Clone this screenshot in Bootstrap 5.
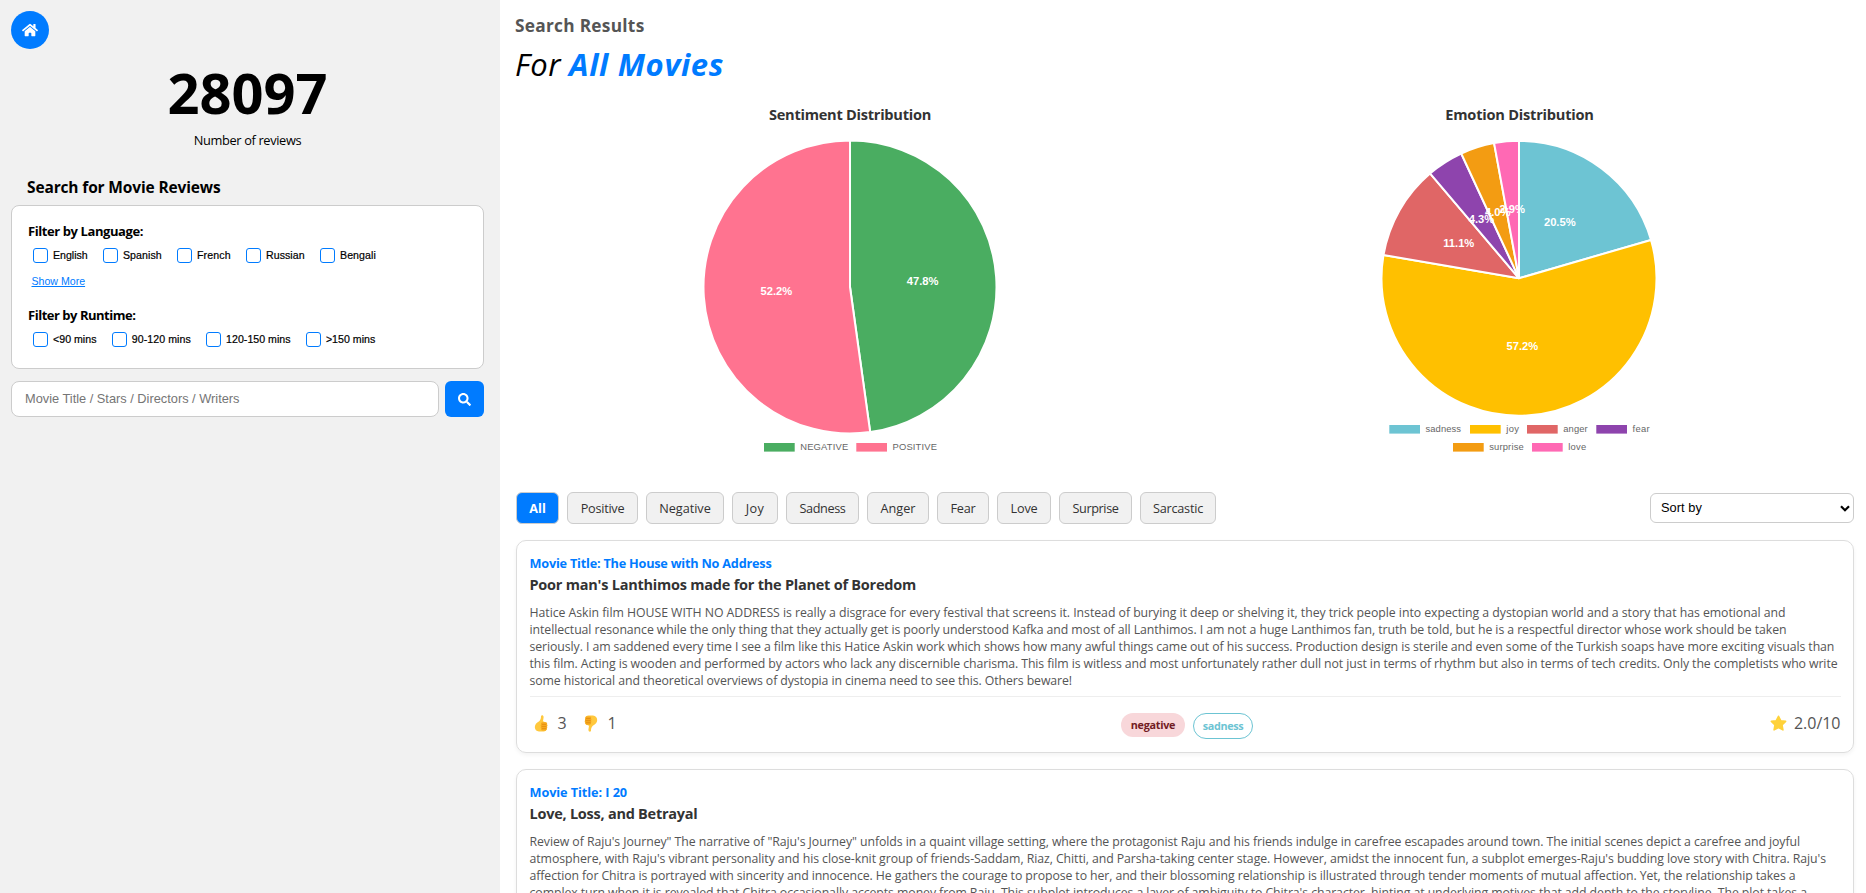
<!DOCTYPE html>
<html lang="en">
<head>
<meta charset="utf-8">
<title>Movie Reviews</title>
<link rel="stylesheet" href="https://cdn.jsdelivr.net/npm/bootstrap@5.3.0/dist/css/bootstrap.min.css">
<style>
body{font-family:"Open Sans","Noto Sans",sans-serif;color:#000;background:#fff}
.page{height:893px;overflow:hidden}
.side{width:500px;height:893px;background:#f1f1f1;padding:11px 16px 0 11px}
.home{width:38px;height:38px;background:#007bff}
.total{font-size:56px;line-height:60px;margin-top:13px}
.total-label{font-size:12.8px;line-height:18px;margin-top:9px}
.side-title{font-size:15.5px;line-height:20px;margin:28px 0 8px 16px}
.filters{height:164px;border:1px solid #ccc;border-radius:8px;padding:16px 17px 0 16px}
.filters h3{font-size:13px;line-height:18px;margin:0 0 8px}
.opts{height:15px;gap:15.3px;padding-left:5px;font:10.6px/15px "Liberation Sans",sans-serif;-webkit-text-stroke:.2px #000}
.opts label{padding-left:20px;position:relative;white-space:nowrap}
.opts label::before{content:"";position:absolute;left:0;top:0;width:15px;height:15px;border:1px solid #007bff;border-radius:3px;background:#fff}
.more{font:10.6px/14px "Liberation Sans",sans-serif;color:#007bff;margin:11px 0 18px 3.5px}
.query-row{margin-top:12px}
.query{height:36px;border:1px solid #ccc;border-radius:8px;font:12.8px "Liberation Sans",sans-serif;padding:0 13px 2px;width:428px}
.query::placeholder{color:#757575}
.go{width:39px;height:36px;background:#007bff;border-radius:6px}
.main-pane{width:1366px;padding:14px 12px 0 15px}
.res{font-size:17.3px;line-height:24px;color:#555;margin:0 0 5px}
.for-line{font-size:31px;line-height:42px;margin:0 0 19px;font-style:italic}
.blue{color:#007bff}
.chart-title{font-size:14.6px;line-height:20px;color:#333;margin:0}
.chart-a{width:670px}.chart-b{width:669px}
svg text{font-family:"Liberation Sans",sans-serif}
.toolbar{padding-left:1px}
.chip{height:32px;border:1px solid #ccc;border-radius:6px;background:#f1f1f1;font-size:12.7px;line-height:30px;color:#333;text-align:center;white-space:nowrap}
.chip.on{background:#007bff;color:#fff;font-weight:700}
.sort{width:204px;height:30px;border:1px solid #ccc;border-radius:6px;font:12.8px/26px "Liberation Sans",sans-serif;padding:0 3px 0 10px;margin-top:1px}
.review{height:213px;border:1px solid #ddd;border-radius:10px;margin:16px 0 0 1px;padding:13px 12.5px 0;box-shadow:0 2px 4px rgba(0,0,0,.05)}
.review h4{font-size:12.7px;line-height:18px;margin:0 0 3px;color:#007bff}
.review h5{font-size:14.5px;line-height:20px;margin:0 0 9px;color:#333}
.body-text{font-size:12.3px;line-height:17px;color:#555;margin:0 0 7px;white-space:nowrap}
.foot{border-top:1px solid #eee;display:grid;grid-template-columns:591.5px auto 1fr;padding-top:16px;align-items:start;color:#555;font-size:16px;line-height:20px}
.foot svg{margin-top:2px}
.tag{font-size:10.8px;font-weight:700;text-align:center;border-radius:13px}
.neg{width:64px;height:24px;line-height:23px;background:#f8d7da;color:#721c24}
.sad{width:60px;height:26px;line-height:24px;border:1px solid #6cc4d3;color:#6cc4d3}
.fit{white-space:nowrap;display:inline-block}
</style>
<script src="https://cdn.jsdelivr.net/npm/bootstrap@5.3.0/dist/js/bootstrap.bundle.min.js"></script>
</head>
<body>
<div class="page d-flex">
<aside class="side flex-shrink-0">
  <a class="home rounded-circle d-flex align-items-center justify-content-center"><svg width="16" height="14.2" viewBox="0 0 576 512" fill="#fff"><path d="M280.37 148.26L96 300.11V464a16 16 0 0 0 16 16l112.06-.29a16 16 0 0 0 15.92-16V368a16 16 0 0 1 16-16h64a16 16 0 0 1 16 16v95.64a16 16 0 0 0 16 16.05L464 480a16 16 0 0 0 16-16V300L295.67 148.26a12.19 12.19 0 0 0-15.3 0zM571.6 251.47L488 182.56V44.05a12 12 0 0 0-12-12h-56a12 12 0 0 0-12 12v72.61L318.47 43a48 48 0 0 0-61 0L4.34 251.47a12 12 0 0 0-1.6 16.9l25.5 31A12 12 0 0 0 45.15 301l235.22-193.74a12.19 12.19 0 0 1 15.3 0L530.9 301a12 12 0 0 0 16.9-1.6l25.5-31a12 12 0 0 0-1.7-16.93z"/></svg></a>
  <div class="total fw-bold text-center"><span class="fit" data-w="160">28097</span></div>
  <div class="total-label text-center"><span class="fit" data-w="107.5">Number of reviews</span></div>
  <h2 class="side-title fw-bold"><span class="fit" data-w="193.5">Search for Movie Reviews</span></h2>
  <div class="filters bg-white">
    <h3 class="fw-bold"><span class="fit" data-w="115">Filter by Language:</span></h3>
    <div class="opts d-flex"><label><span class="fit" data-w="34.7">English</span></label><label><span class="fit" data-w="38.7">Spanish</span></label><label><span class="fit" data-w="33.7">French</span></label><label><span class="fit" data-w="38.7">Russian</span></label><label><span class="fit" data-w="36">Bengali</span></label></div>
    <div class="more text-decoration-underline">Show More</div>
    <h3 class="fw-bold"><span class="fit" data-w="107.5">Filter by Runtime:</span></h3>
    <div class="opts d-flex"><label><span class="fit" data-w="43.5">&lt;90 mins</span></label><label><span class="fit" data-w="59">90-120 mins</span></label><label><span class="fit" data-w="64.5">120-150 mins</span></label><label><span class="fit" data-w="49.5">&gt;150 mins</span></label></div>
  </div>
  <div class="query-row d-flex justify-content-between">
    <input class="query" placeholder="Movie Title / Stars / Directors / Writers">
    <a class="go d-flex align-items-center justify-content-center"><svg width="13" height="13" viewBox="0 0 512 512" fill="#fff"><path d="M505 442.7L405.3 343c-4.5-4.5-10.6-7-17-7H372c27.6-35.3 44-79.7 44-128C416 93.1 322.9 0 208 0S0 93.1 0 208s93.1 208 208 208c48.3 0 92.7-16.4 128-44v16.3c0 6.4 2.5 12.5 7 17l99.7 99.7c9.4 9.4 24.6 9.4 33.9 0l28.3-28.3c9.4-9.4 9.4-24.6.1-34zM208 336c-70.7 0-128-57.2-128-128 0-70.7 57.2-128 128-128 70.7 0 128 57.2 128 128 0 70.7-57.2 128-128 128z"/></svg></a>
  </div>
</aside>
<main class="main-pane flex-shrink-0">
  <h2 class="res fw-bold"><span class="fit" data-w="129.5">Search Results</span></h2>
  <p class="for-line"><span class="fit" data-w="46">For</span> <span class="fit blue fw-bold" data-w="155">All Movies</span></p>
  <div class="d-flex">
    <section class="chart-a text-center"><h3 class="chart-title fw-bold"><span class="fit" data-w="162">Sentiment Distribution</span></h3><svg id="pieA" class="d-block mx-auto" width="340" height="368" viewBox="680 124 340 368"></svg></section>
    <section class="chart-b text-center"><h3 class="chart-title fw-bold"><span class="fit" data-w="148.5">Emotion Distribution</span></h3><svg id="pieB" class="d-block mx-auto" width="339" height="368" viewBox="1350 124 339 368"></svg></section>
  </div>
  <div class="toolbar d-flex justify-content-between align-items-start">
    <div class="d-flex gap-2">
      <div class="chip on" style="width:43px"><span class="fit" data-w="16.5">All</span></div>
      <div class="chip" style="width:71px"><span class="fit" data-w="43.5">Positive</span></div>
      <div class="chip" style="width:78px"><span class="fit" data-w="51.5">Negative</span></div>
      <div class="chip" style="width:46px"><span class="fit" data-w="18.5">Joy</span></div>
      <div class="chip" style="width:73px"><span class="fit" data-w="46">Sadness</span></div>
      <div class="chip" style="width:62px"><span class="fit" data-w="35">Anger</span></div>
      <div class="chip" style="width:52px"><span class="fit" data-w="25">Fear</span></div>
      <div class="chip" style="width:54px"><span class="fit" data-w="27">Love</span></div>
      <div class="chip" style="width:73px"><span class="fit" data-w="46">Surprise</span></div>
      <div class="chip" style="width:76px"><span class="fit" data-w="50">Sarcastic</span></div>
    </div>
    <div class="sort bg-white d-flex justify-content-between align-items-center"><span class="fit" data-w="41">Sort by</span><svg width="10" height="7" viewBox="0 0 10 7"><path d="M1 1.2 5 5.2 9 1.2" fill="none" stroke="#000" stroke-width="2.2"/></svg></div>
  </div>
  <article class="review">
    <h4 class="fw-bold"><span class="fit" data-w="242">Movie Title: The House with No Address</span></h4>
    <h5 class="fw-bold"><span class="fit" data-w="386.5">Poor man's Lanthimos made for the Planet of Boredom</span></h5>
    <p class="body-text"><span class="fit" data-w="1256">Hatice Askin film HOUSE WITH NO ADDRESS is really a disgrace for every festival that screens it. Instead of burying it deep or shelving it, they trick people into expecting a dystopian world and a story that has emotional and</span><br><span class="fit" data-w="1257">intellectual resonance while the only thing that they actually get is poorly understood Kafka and most of all Lanthimos. I am not a huge Lanthimos fan, truth be told, but he is a respectful director whose work should be taken</span><br><span class="fit" data-w="1304.8">seriously. I am saddened every time I see a film like this Hatice Askin work which shows how many awful things came out of his success. Production design is sterile and even some of the Turkish soaps have more exciting visuals than</span><br><span class="fit" data-w="1308">this film. Acting is wooden and performed by actors who lack any discernible charisma. This film is witless and most unfortunately rather dull not just in terms of rhythm but also in terms of tech credits. Only the completists who write</span><br><span class="fit" data-w="542.5">some historical and theoretical overviews of dystopia in cinema need to see this. Others beware!</span></p>
    <div class="foot">
      <div class="d-flex"><svg class="ms-1" width="14" height="17" viewBox="0 0 14 17"><path d="M5.2 6.2C6.8 4.6 7 3 7 1.2 7.4-.2 9.6.1 9.6 2.3L9 6.2 12 7.5q1.3 1 1.2 3l-.4 3.6Q12.4 16.3 10 16.5H5Q1 16 .8 12 .9 8.5 5.2 6.2Z" fill="#ffc83d"/><path d="M8 7.3h4q1.8.3 1 2 .9 1.1 0 2.2.7 1.2-.2 2.1.3 1.5-1.2 1.9H8q-1.3-.4-.9-1.9-.9-1-.1-2.1-.8-1.1 0-2.1Q6.5 8 8 7.3Z" fill="#f6a821"/><path d="M8 9.4h4M7.7 11.5h4.5M8 13.6h4" stroke="#d67d00" stroke-width=".5"/></svg><span style="width:36px;padding-left:10px">3</span><svg width="14" height="17" viewBox="0 0 14 17"><path d="M8.8 10.8C7.2 12.4 7 14 7 15.8 6.6 17.2 4.4 16.9 4.4 14.7L5 10.8 2 9.5Q.7 8.5.8 6.5L1.2 2.9Q1.6.7 4 .5H9Q13 1 13.2 5 13.1 8.5 8.8 10.8Z" fill="#ffc83d"/><path d="M2 1.5h4.5q1.2 1 .5 2.1 1 1 0 2.1.8 1 0 2.1.3 1.5-1 1.9H2.5Q.8 9 1.3 7.6.4 6.500 1.100 5.500.7 4.300 1.400 3.500 1 2.300 2 1.500Z" fill="#f6a821"/><path d="M2 3.500h4.500M1.600 5.600h5M2 7.700h4.500" stroke="#d67d00" stroke-width=".5"/></svg><span style="padding-left:10px">1</span></div>
      <div class="d-flex gap-2"><span class="tag neg"><span class="fit" data-w="44.5">negative</span></span><span class="tag sad"><span class="fit" data-w="40.5">sadness</span></span></div>
      <div class="d-flex justify-content-end"><svg width="17" height="17" viewBox="0 0 17 17"><path d="M8.5 1.3 10.7 5.7 15.6 6.4 12 9.9 12.9 14.9 8.5 12.6 4.1 14.9 5 9.9 1.4 6.4 6.3 5.7Z" fill="#ffd23a" stroke="#ffd23a" stroke-width="1.6" stroke-linejoin="round"/></svg><span style="padding-left:7px"><span class="fit" data-w="46.5">2.0/10</span></span></div>
    </div>
  </article>
  <article class="review">
    <h4 class="fw-bold"><span class="fit" data-w="97.5">Movie Title: I 20</span></h4>
    <h5 class="fw-bold"><span class="fit" data-w="168">Love, Loss, and Betrayal</span></h5>
    <p class="body-text"><span class="fit" data-w="1270.5">Review of Raju's Journey" The narrative of "Raju's Journey" unfolds in a quaint village setting, where the protagonist Raju and his friends indulge in carefree escapades around town. The initial scenes depict a carefree and joyful</span><br><span class="fit" data-w="1296.5">atmosphere, with Raju's vibrant personality and his close-knit group of friends-Saddam, Riaz, Chitti, and Parsha-taking center stage. However, amidst the innocent fun, a subplot emerges-Raju's budding love story with Chitra. Raju's</span><br><span class="fit" data-w="1266">affection for Chitra is portrayed with sincerity and innocence. He gathers the courage to propose to her, and their blossoming relationship is illustrated through tender moments of mutual affection. Yet, the relationship takes a</span><br><span class="fit" data-w="1277.5">complex turn when it is revealed that Chitra occasionally accepts money from Raju. This subplot introduces a layer of ambiguity to Chitra's character, hinting at underlying motives that add depth to the storyline. The plot takes a</span></p>
  </article>
</main>
</div>
<script>
// Draws a pie with percentage labels and its legend into an svg.
function pie(id,cx,cy,r,slices,legend){
  let a=0,s='',t='';
  const p=(d,k)=>[cx+k*Math.sin(d),cy-k*Math.cos(d)];
  for(const [v,c] of slices){
    const b=a+v/100*2*Math.PI,[x1,y1]=p(a,r),[x2,y2]=p(b,r),[mx,my]=p((a+b)/2,r/2);
    s+=`<path d="M${cx} ${cy}L${x1} ${y1}A${r} ${r} 0 ${v>50?1:0} 1 ${x2} ${y2}Z" fill="${c}" stroke="#fff" stroke-width="2" stroke-linejoin="bevel"/>`;
    t+=`<text x="${mx-.5}" y="${my+3}" font-size="11.2" font-weight="700" fill="#fff" text-anchor="middle">${v.toFixed(1)}%</text>`;
    a=b;
  }
  for(const [x,y,c,n,w] of legend)
    t+=`<rect x="${x}" y="${y}" width="30.7" height="8.6" fill="${c}"/><text x="${x+36.2}" y="${y+6.6}" font-size="9.4" fill="#666" textLength="${w}">${n}</text>`;
  document.getElementById(id).innerHTML=s+t;
}
pie('pieA',850,287,146.5,[[47.8,'#4aad61'],[52.2,'#ff7390']],[[764,443,'#4aad61','NEGATIVE',48],[856.3,443,'#ff7390','POSITIVE',44.5]]);
pie('pieB',1519,278.3,137.5,[[20.5,'#6dc4d3'],[57.2,'#ffc000'],[11.1,'#e06666'],[4.3,'#8e44ad'],[4.0,'#f39c12'],[2.9,'#ff69b4']],
 [[1389.3,425,'#6dc4d3','sadness',35.5],[1470,425,'#ffc000','joy',12.7],[1527,425,'#e06666','anger',24.5],[1596.3,425,'#8e44ad','fear',17],[1453,443,'#f39c12','surprise',34.5],[1532,443,'#ff69b4','love',18]]);
// Tracks each run of text so that it takes the width given in data-w.
document.querySelectorAll('.fit').forEach(e=>{
  e.style.letterSpacing=(e.dataset.w-e.getBoundingClientRect().width)/e.textContent.length+'px';
});
</script>
</body>
</html>
